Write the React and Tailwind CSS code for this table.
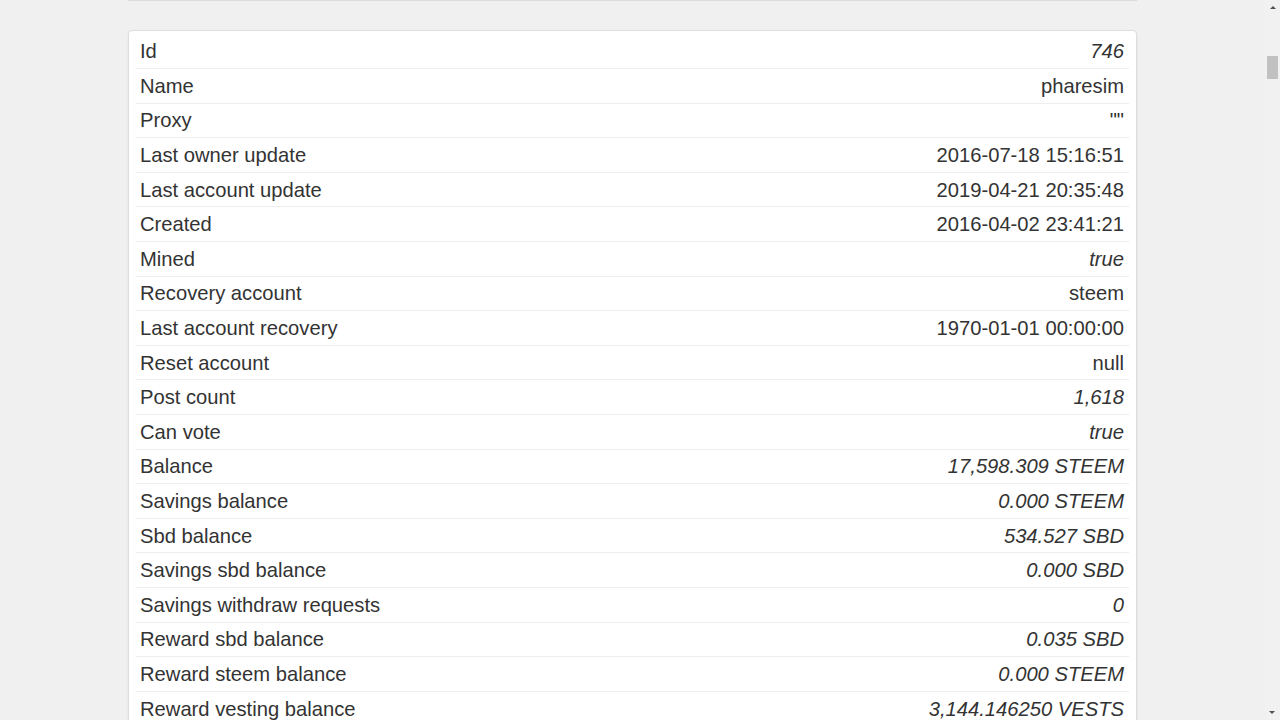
import React from 'react';

const rows = [
  ['Id', '746', true],
  ['Name', 'pharesim', false],
  ['Proxy', '""', false],
  ['Last owner update', '2016-07-18 15:16:51', false],
  ['Last account update', '2019-04-21 20:35:48', false],
  ['Created', '2016-04-02 23:41:21', false],
  ['Mined', 'true', true],
  ['Recovery account', 'steem', false],
  ['Last account recovery', '1970-01-01 00:00:00', false],
  ['Reset account', 'null', false],
  ['Post count', '1,618', true],
  ['Can vote', 'true', true],
  ['Balance', '17,598.309 STEEM', true],
  ['Savings balance', '0.000 STEEM', true],
  ['Sbd balance', '534.527 SBD', true],
  ['Savings sbd balance', '0.000 SBD', true],
  ['Savings withdraw requests', '0', true],
  ['Reward sbd balance', '0.035 SBD', true],
  ['Reward steem balance', '0.000 STEEM', true],
  ['Reward vesting balance', '3,144.146250 VESTS', true],
];

export default function App() {
  return (
    <div className="h-[720px] overflow-hidden bg-[#f0f0f0] text-[#333] font-['Liberation_Sans',Arial,sans-serif]">
      <div className="w-[1009px] ml-[128px] h-px bg-[#dcdcdc]" />
      <div className="w-[1009px] ml-[128px] mt-[29px] bg-white border border-[#dddddd] rounded shadow-[0_1px_2px_rgba(0,0,0,0.08)] px-[7px] pt-[3px]">
        <table className="w-full border-collapse">
          <tbody>
            {rows.map(([k, v, it], i) => (
              <tr key={k} className={i === 0 ? '' : 'border-t border-[#eeeeee]'}>
                <td className="h-[34.6px] pl-[4px] text-[20.2px] leading-none align-middle">{k}</td>
                <td className={`h-[34.6px] pr-[5px] text-right text-[20.2px] leading-none align-middle ${it ? 'italic' : ''}`}>{v}</td>
              </tr>
            ))}
          </tbody>
        </table>
      </div>
      <div className="fixed top-0 right-0 w-[15px] h-[720px] bg-[#f1f1f1]">
        <div className="mx-auto mt-[6px] w-0 h-0 border-l-[3px] border-r-[3px] border-b-[3px] border-l-transparent border-r-transparent border-b-[#505050]" />
        <div className="mx-auto mt-[47px] w-[11px] h-[23px] bg-[#c1c1c1]" />
        <div className="absolute bottom-[6px] left-[4px] w-0 h-0 border-l-[3px] border-r-[3px] border-t-[3px] border-l-transparent border-r-transparent border-t-[#505050]" />
      </div>
    </div>
  );
}
